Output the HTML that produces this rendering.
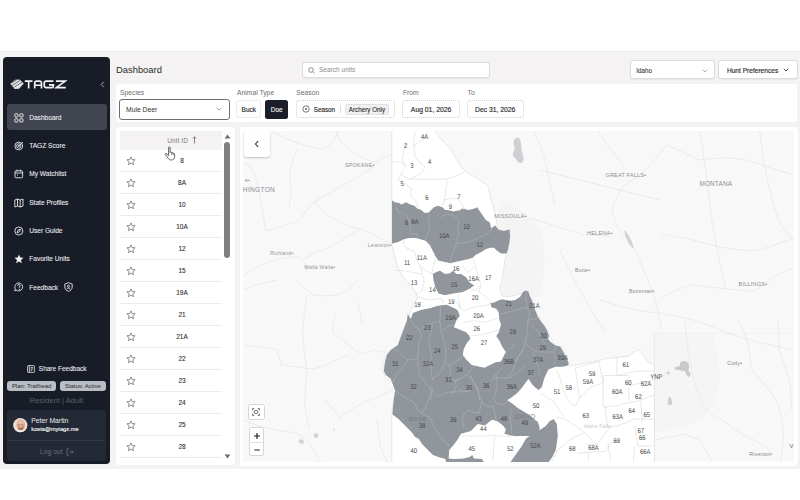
<!DOCTYPE html>
<html><head><meta charset="utf-8">
<style>
*{box-sizing:border-box;margin:0;padding:0}
html,body{width:800px;height:500px;overflow:hidden;background:#fff;font-family:"Liberation Sans",sans-serif;color:#2a2a2a}
.a{position:absolute}
.t{position:absolute;white-space:nowrap;line-height:1}
#bg{left:0;top:51px;width:800px;height:418px;background:#f4f2f3;border-top:1.5px solid #ebebeb}
#side{left:3px;top:57px;width:107.3px;height:407.3px;background:#181c27;border-radius:4px}
.nav{color:#eceef2;font-size:6.6px;-webkit-text-stroke:0.08px #eceef2}
.panel{background:#fff;border-radius:3px}
.lbl{color:#6e6e6e;font-size:6.8px}
.box{background:#fff;border:1px solid #e6e6e6;border-radius:3px}
.dash{background:#fff;border:0.75px dotted #d0d0d0;border-radius:3px}
.row{position:absolute;left:120px;width:102px;height:22px;border-bottom:1px solid #ececec}
.num{position:absolute;left:0;width:100%;text-align:center;font-size:6.8px;color:#2d2d2d;top:7px;padding-left:20px}
.star{position:absolute;left:6px;top:6px}
</style></head><body>
<div id="bg" class="a"></div>

<!-- SIDEBAR -->
<div id="side" class="a"></div>
<!-- logo -->
<svg class="a" style="left:0;top:70px" width="80" height="25" viewBox="0 70 80 25">
 <g fill="#f4f4f4">
  <path d="M10.3 83.8 L15.2 79.8 L19.5 79.6 L23.8 83.4 L19 88.8 L14.6 88.9 Z" opacity="0.92"/>
 </g>
 <path d="M12 85.5 L20 80.5 M13.5 87.5 L22.5 82 M11.5 83 L16.5 80" stroke="#1a1d28" stroke-width="0.7" opacity="0.8"/>
 <g fill="none" stroke="#f4f4f4" stroke-width="1.65" stroke-linejoin="miter">
  <path d="M24.8 81.1 H32.5 M28.65 81.1 V88.4"/>
  <path d="M34.7 88.4 V83.2 Q34.7 81.1 36.8 81.1 H39.4 Q41.5 81.1 41.5 83.2 V88.4 M34.7 85.2 H41.5"/>
  <path d="M53.4 81.1 H46.3 Q44.2 81.1 44.2 83.2 V85.6 Q44.2 87.6 46.3 87.6 H51.6 Q53.4 87.6 53.4 85.8 V84.9 H49"/>
  <path d="M55.9 81.1 H65.2 L56.3 87.6 H65.8"/>
 </g>
</svg>
<svg class="a" style="left:100px;top:81px" width="5" height="7" viewBox="0 0 5 7"><path d="M3.8 0.8 L1.2 3.5 L3.8 6.2" fill="none" stroke="#b8bbc2" stroke-width="0.9"/></svg>

<div class="a" style="left:6.5px;top:104px;width:100px;height:26px;background:#41454f;border-radius:3px"></div>
<!-- nav icons -->
<svg class="a" style="left:14px;top:112.5px" width="10" height="10" viewBox="0 0 10 10" fill="none" stroke="#e8e8ea" stroke-width="1"><rect x="0.8" y="0.8" width="3.2" height="3.2" rx="0.8"/><rect x="5.8" y="0.8" width="3.2" height="3.2" rx="0.8"/><rect x="0.8" y="5.8" width="3.2" height="3.2" rx="0.8"/><rect x="5.8" y="5.8" width="3.2" height="3.2" rx="0.8"/></svg>
<div class="t nav" style="left:29.2px;top:114.7px">Dashboard</div>

<svg class="a" style="left:14px;top:140.8px" width="10" height="10" viewBox="0 0 10 10" fill="none" stroke="#e8e8ea" stroke-width="0.9"><circle cx="4.8" cy="5" r="3.9"/><circle cx="4.8" cy="5" r="2.2"/><circle cx="4.8" cy="5" r="0.6"/><path d="M4.8 5 L8.8 1"/></svg>
<div class="t nav" style="left:29.2px;top:143.0px">TAGZ Score</div>

<svg class="a" style="left:14px;top:169px" width="10" height="10" viewBox="0 0 10 10" fill="none" stroke="#e8e8ea" stroke-width="0.9"><rect x="1" y="1.8" width="7.6" height="7" rx="1"/><path d="M1 4 H8.6 M3 0.6 V2.6 M6.6 0.6 V2.6 M3 6 H4"/></svg>
<div class="t nav" style="left:29.2px;top:171.2px">My Watchlist</div>

<svg class="a" style="left:14px;top:197.6px" width="10" height="10" viewBox="0 0 10 10" fill="none" stroke="#e8e8ea" stroke-width="0.9"><path d="M0.8 2 L3.5 1 L6.2 2 L9 1 V8 L6.2 9 L3.5 8 L0.8 9 Z M3.5 1 V8 M6.2 2 V9"/></svg>
<div class="t nav" style="left:29.2px;top:199.8px">State Profiles</div>

<svg class="a" style="left:14px;top:225.8px" width="10" height="10" viewBox="0 0 10 10" fill="none" stroke="#e8e8ea" stroke-width="0.9"><circle cx="4.8" cy="5" r="4"/><path d="M6.5 3.2 L5.6 5.8 L3.1 6.8 L4 4.2 Z"/></svg>
<div class="t nav" style="left:29.2px;top:228.0px">User Guide</div>

<svg class="a" style="left:13.5px;top:254px" width="10" height="10" viewBox="0 0 10 10"><path d="M5 0.6 L6.3 3.6 L9.5 3.8 L7 5.9 L7.8 9.2 L5 7.4 L2.2 9.2 L3 5.9 L0.5 3.8 L3.7 3.6 Z" fill="#f2f2f2"/></svg>
<div class="t nav" style="left:29.2px;top:256.3px">Favorite Units</div>

<svg class="a" style="left:14px;top:282.3px" width="10" height="10" viewBox="0 0 10 10" fill="none" stroke="#e8e8ea" stroke-width="0.9"><path d="M4.9 0.9 A4 4 0 1 1 2 7.9 L0.8 9 L1.2 6.6 A4 4 0 0 1 4.9 0.9 Z"/><path d="M3.6 3.8 A1.3 1.3 0 1 1 5.2 5 V5.8"/><circle cx="5.2" cy="7.3" r="0.3"/></svg>
<div class="t nav" style="left:29.2px;top:284.5px">Feedback</div>
<svg class="a" style="left:63.5px;top:282.3px" width="9" height="10" viewBox="0 0 9 10" fill="none" stroke="#e8e8ea" stroke-width="0.9"><path d="M4.5 0.7 L8.2 2 V5 C8.2 7.2 6.5 8.7 4.5 9.3 C2.5 8.7 0.8 7.2 0.8 5 V2 Z"/><circle cx="4.5" cy="4.3" r="1.1"/><path d="M2.8 7 C3.3 6 5.7 6 6.2 7"/></svg>

<!-- share feedback -->
<svg class="a" style="left:27px;top:364.5px" width="8" height="8" viewBox="0 0 8 8" fill="none" stroke="#e8e8ea" stroke-width="0.8"><rect x="0.6" y="0.6" width="6.8" height="6.8" rx="0.6"/><path d="M2.3 0.6 V7.4 M3.6 2.6 H6 M3.6 4 H6 M3.6 5.4 H5"/></svg>
<div class="t nav" style="left:38.8px;top:366.3px;font-size:6.5px">Share Feedback</div>

<div class="a" style="left:7.2px;top:381px;width:48.8px;height:10.2px;background:#b9bdc4;border-radius:3px"></div>
<div class="t" style="left:7.2px;top:383.6px;width:48.8px;text-align:center;font-size:5.9px;color:#2a2c33">Plan: Trailhead</div>
<div class="a" style="left:59.7px;top:381px;width:46.4px;height:10.2px;background:#b9bdc4;border-radius:3px"></div>
<div class="t" style="left:59.7px;top:383.6px;width:46.4px;text-align:center;font-size:5.9px;color:#2a2c33">Status: Active</div>
<div class="t" style="left:29.5px;top:397px;font-size:7.7px;color:#5b606b">Resident | Adult</div>

<div class="a" style="left:6.5px;top:410px;width:99.5px;height:51px;background:#232a36;border-radius:3px"></div>
<svg class="a" style="left:12.5px;top:418px" width="15" height="15" viewBox="0 0 15 15"><defs><clipPath id="av"><circle cx="7.3" cy="7.2" r="7"/></clipPath></defs><circle cx="7.3" cy="7.2" r="7.1" fill="#efe0d6"/><g clip-path="url(#av)"><ellipse cx="7.8" cy="6.8" rx="4.3" ry="5.2" fill="#d7a285"/><ellipse cx="7.6" cy="4.2" rx="3.6" ry="2.6" fill="#e4bba3"/><path d="M5 8.5 C6 10.5 9 10.5 10.5 8.6 L10.3 11 C9 12.6 6.5 12.6 5.2 11 Z" fill="#a96f55"/><path d="M2 15 C3 11.5 12 11.5 13 15 Z" fill="#f4ece6"/><path d="M5.6 6.6 H6.8 M8.6 6.6 H9.8" stroke="#6b4636" stroke-width="0.6"/></g></svg>
<div class="t" style="left:31.3px;top:418px;font-size:6.8px;color:#e9eaee">Peter Martin</div>
<div class="t" style="left:31.3px;top:427.2px;font-size:5.8px;color:#fafafa;-webkit-text-stroke:0.12px #fafafa;letter-spacing:-0.05px">kosta@mytagz.me</div>
<div class="a" style="left:8px;top:440px;width:97px;height:1px;background:#323848"></div>
<div class="t" style="left:40px;top:448.6px;font-size:6.8px;color:#686d78">Log out</div>
<svg class="a" style="left:65.5px;top:447.5px" width="8" height="8" viewBox="0 0 8 8" fill="none" stroke="#6b707b" stroke-width="0.8"><path d="M3 0.7 H1 V7.3 H3 M3 4 H7.2 M5.6 2.4 L7.2 4 L5.6 5.6"/></svg>

<!-- HEADER -->
<div class="t" style="left:116px;top:65px;font-size:9.4px;color:#2b2b2b;color:#2b2b2b">Dashboard</div>
<div class="a box" style="left:301.8px;top:61.6px;width:188.4px;height:16.8px;border-color:#dcdcdc;box-shadow:0 0.5px 1px rgba(0,0,0,0.05)"></div>
<svg class="a" style="left:307.5px;top:66.5px" width="7" height="7" viewBox="0 0 7 7" fill="none" stroke="#777" stroke-width="0.8"><circle cx="3" cy="3" r="2.3"/><path d="M4.7 4.7 L6.4 6.4"/></svg>
<div class="t" style="left:319px;top:67px;font-size:6.55px;color:#8c8c8c">Search units</div>

<div class="a box" style="left:630px;top:60.4px;width:84.5px;height:19px;border-color:#dcdcdc;box-shadow:0 0.5px 1px rgba(0,0,0,0.05)"></div>
<div class="t" style="left:636.2px;top:67.6px;font-size:6.3px;color:#333;-webkit-text-stroke:0.08px #333">Idaho</div>
<svg class="a" style="left:702px;top:68.5px" width="6" height="4" viewBox="0 0 6 4"><path d="M0.8 0.8 L3 3 L5.2 0.8" fill="none" stroke="#888" stroke-width="0.7"/></svg>
<div class="a box" style="left:718.3px;top:60.4px;width:79.5px;height:19px;border-color:#dcdcdc;box-shadow:0 0.5px 1px rgba(0,0,0,0.05)"></div>
<div class="t" style="left:726.9px;top:67.6px;font-size:6.6px;color:#2a2a2a;-webkit-text-stroke:0.15px #2a2a2a">Hunt Preferences</div>
<svg class="a" style="left:783px;top:68.3px" width="6" height="4" viewBox="0 0 6 4"><path d="M0.8 0.8 L3 3 L5.2 0.8" fill="none" stroke="#333" stroke-width="0.9"/></svg>

<!-- FILTER PANEL -->
<div class="a panel" style="left:116px;top:83.7px;width:681.4px;height:38.3px"></div>
<div class="t lbl" style="left:120px;top:89.8px">Species</div>
<div class="a" style="left:119.2px;top:99.3px;width:111px;height:20.4px;border:1.25px solid #6e6e6e;border-radius:3px;background:#fff"></div>
<div class="t" style="left:126px;top:106.6px;font-size:6.8px;color:#333">Mule Deer</div>
<svg class="a" style="left:216.3px;top:107.3px" width="6" height="4" viewBox="0 0 6 4"><path d="M0.7 0.9 L3 3 L5.3 0.9" fill="none" stroke="#8a8a8a" stroke-width="0.85"/></svg>

<div class="t lbl" style="left:236.9px;top:89.8px">Animal Type</div>
<div class="a box" style="left:236.3px;top:100px;width:25px;height:18.3px;border-color:#ececec"></div>
<div class="t" style="left:236.3px;top:106.7px;width:25px;text-align:center;font-size:6.5px;color:#2a2a2a;-webkit-text-stroke:0.15px #2a2a2a">Buck</div>
<div class="a" style="left:265.3px;top:100px;width:22.8px;height:18.5px;background:#1b1e29;border-radius:2.5px"></div>
<div class="t" style="left:265.3px;top:106.7px;width:22.8px;text-align:center;font-size:6.5px;color:#f2f2f2;-webkit-text-stroke:0.12px #f2f2f2">Doe</div>

<div class="t lbl" style="left:296.2px;top:89.8px">Season</div>
<div class="a dash" style="left:296.2px;top:100.4px;width:99px;height:17.8px"></div>
<svg class="a" style="left:301.5px;top:105.4px" width="8" height="8" viewBox="0 0 8 8"><circle cx="4" cy="4" r="3.2" fill="none" stroke="#555" stroke-width="0.8"/><circle cx="4" cy="4" r="0.9" fill="#555"/></svg>
<div class="t" style="left:313.7px;top:106.9px;font-size:6.3px;color:#2a2a2a;-webkit-text-stroke:0.15px #2a2a2a">Season</div>
<div class="a" style="left:339.6px;top:105.4px;width:0.8px;height:7.6px;background:#dcdcdc"></div>
<div class="a" style="left:345px;top:103.7px;width:43.8px;height:11.3px;background:#f0f0f0;border:0.6px solid #e2e2e2;border-radius:2px"></div>
<div class="t" style="left:345px;top:106.9px;width:43.8px;text-align:center;font-size:6.3px;color:#2a2a2a;-webkit-text-stroke:0.1px #2a2a2a">Archery Only</div>

<div class="t lbl" style="left:402.9px;top:89.8px">From</div>
<div class="a dash" style="left:402.4px;top:100.1px;width:57.4px;height:18.4px"></div>
<div class="t" style="left:402.4px;top:106.9px;width:57.4px;text-align:center;font-size:6.8px;color:#2a2a2a;-webkit-text-stroke:0.15px #2a2a2a">Aug 01, 2026</div>
<div class="t lbl" style="left:467.6px;top:89.8px">To</div>
<div class="a dash" style="left:466.8px;top:100.1px;width:56.8px;height:18.4px"></div>
<div class="t" style="left:466.8px;top:106.9px;width:56.8px;text-align:center;font-size:6.8px;color:#2a2a2a;-webkit-text-stroke:0.15px #2a2a2a">Dec 31, 2026</div>

<!-- TABLE PANEL -->
<div class="a panel" style="left:116px;top:127px;width:119.1px;height:337.5px"></div>
<div class="a" style="left:120px;top:131px;width:102px;height:19px;background:#f4f2f3"></div>
<div class="t" style="left:167.2px;top:137.6px;font-size:6.4px;letter-spacing:0.2px;color:#7a7a7a">Unit ID</div>
<svg class="a" style="left:191.5px;top:136.3px" width="5" height="8" viewBox="0 0 5 8"><path d="M2.5 0.8 V7.5 M0.8 2.5 L2.5 0.8 L4.2 2.5" fill="none" stroke="#666" stroke-width="0.8"/></svg>
<div class="a" style="left:116px;top:150px;width:119.5px;height:311px;overflow:hidden">
<div class="a" style="left:4px;top:21.2px;width:102px;height:1px;background:#ececec"></div>
<svg class="a" style="left:9.6px;top:5.6px" width="10" height="10" viewBox="0 0 10 10"><path d="M5 0.9 L6.15 3.55 L9.1 3.8 L6.85 5.75 L7.55 8.7 L5 7.15 L2.45 8.7 L3.15 5.75 L0.9 3.8 L3.85 3.55 Z" fill="none" stroke="#6a6a6a" stroke-width="0.75" stroke-linejoin="round"/></svg>
<div class="t" style="left:46px;top:7.7px;width:40px;text-align:center;font-size:6.5px;color:#2a2a2a;-webkit-text-stroke:0.08px #2a2a2a">8</div>
<div class="a" style="left:4px;top:43.2px;width:102px;height:1px;background:#ececec"></div>
<svg class="a" style="left:9.6px;top:27.6px" width="10" height="10" viewBox="0 0 10 10"><path d="M5 0.9 L6.15 3.55 L9.1 3.8 L6.85 5.75 L7.55 8.7 L5 7.15 L2.45 8.7 L3.15 5.75 L0.9 3.8 L3.85 3.55 Z" fill="none" stroke="#6a6a6a" stroke-width="0.75" stroke-linejoin="round"/></svg>
<div class="t" style="left:46px;top:29.7px;width:40px;text-align:center;font-size:6.5px;color:#2a2a2a;-webkit-text-stroke:0.08px #2a2a2a">8A</div>
<div class="a" style="left:4px;top:65.2px;width:102px;height:1px;background:#ececec"></div>
<svg class="a" style="left:9.6px;top:49.6px" width="10" height="10" viewBox="0 0 10 10"><path d="M5 0.9 L6.15 3.55 L9.1 3.8 L6.85 5.75 L7.55 8.7 L5 7.15 L2.45 8.7 L3.15 5.75 L0.9 3.8 L3.85 3.55 Z" fill="none" stroke="#6a6a6a" stroke-width="0.75" stroke-linejoin="round"/></svg>
<div class="t" style="left:46px;top:51.7px;width:40px;text-align:center;font-size:6.5px;color:#2a2a2a;-webkit-text-stroke:0.08px #2a2a2a">10</div>
<div class="a" style="left:4px;top:87.2px;width:102px;height:1px;background:#ececec"></div>
<svg class="a" style="left:9.6px;top:71.6px" width="10" height="10" viewBox="0 0 10 10"><path d="M5 0.9 L6.15 3.55 L9.1 3.8 L6.85 5.75 L7.55 8.7 L5 7.15 L2.45 8.7 L3.15 5.75 L0.9 3.8 L3.85 3.55 Z" fill="none" stroke="#6a6a6a" stroke-width="0.75" stroke-linejoin="round"/></svg>
<div class="t" style="left:46px;top:73.7px;width:40px;text-align:center;font-size:6.5px;color:#2a2a2a;-webkit-text-stroke:0.08px #2a2a2a">10A</div>
<div class="a" style="left:4px;top:109.2px;width:102px;height:1px;background:#ececec"></div>
<svg class="a" style="left:9.6px;top:93.6px" width="10" height="10" viewBox="0 0 10 10"><path d="M5 0.9 L6.15 3.55 L9.1 3.8 L6.85 5.75 L7.55 8.7 L5 7.15 L2.45 8.7 L3.15 5.75 L0.9 3.8 L3.85 3.55 Z" fill="none" stroke="#6a6a6a" stroke-width="0.75" stroke-linejoin="round"/></svg>
<div class="t" style="left:46px;top:95.7px;width:40px;text-align:center;font-size:6.5px;color:#2a2a2a;-webkit-text-stroke:0.08px #2a2a2a">12</div>
<div class="a" style="left:4px;top:131.2px;width:102px;height:1px;background:#ececec"></div>
<svg class="a" style="left:9.6px;top:115.6px" width="10" height="10" viewBox="0 0 10 10"><path d="M5 0.9 L6.15 3.55 L9.1 3.8 L6.85 5.75 L7.55 8.7 L5 7.15 L2.45 8.7 L3.15 5.75 L0.9 3.8 L3.85 3.55 Z" fill="none" stroke="#6a6a6a" stroke-width="0.75" stroke-linejoin="round"/></svg>
<div class="t" style="left:46px;top:117.7px;width:40px;text-align:center;font-size:6.5px;color:#2a2a2a;-webkit-text-stroke:0.08px #2a2a2a">15</div>
<div class="a" style="left:4px;top:153.2px;width:102px;height:1px;background:#ececec"></div>
<svg class="a" style="left:9.6px;top:137.6px" width="10" height="10" viewBox="0 0 10 10"><path d="M5 0.9 L6.15 3.55 L9.1 3.8 L6.85 5.75 L7.55 8.7 L5 7.15 L2.45 8.7 L3.15 5.75 L0.9 3.8 L3.85 3.55 Z" fill="none" stroke="#6a6a6a" stroke-width="0.75" stroke-linejoin="round"/></svg>
<div class="t" style="left:46px;top:139.7px;width:40px;text-align:center;font-size:6.5px;color:#2a2a2a;-webkit-text-stroke:0.08px #2a2a2a">19A</div>
<div class="a" style="left:4px;top:175.2px;width:102px;height:1px;background:#ececec"></div>
<svg class="a" style="left:9.6px;top:159.6px" width="10" height="10" viewBox="0 0 10 10"><path d="M5 0.9 L6.15 3.55 L9.1 3.8 L6.85 5.75 L7.55 8.7 L5 7.15 L2.45 8.7 L3.15 5.75 L0.9 3.8 L3.85 3.55 Z" fill="none" stroke="#6a6a6a" stroke-width="0.75" stroke-linejoin="round"/></svg>
<div class="t" style="left:46px;top:161.7px;width:40px;text-align:center;font-size:6.5px;color:#2a2a2a;-webkit-text-stroke:0.08px #2a2a2a">21</div>
<div class="a" style="left:4px;top:197.2px;width:102px;height:1px;background:#ececec"></div>
<svg class="a" style="left:9.6px;top:181.6px" width="10" height="10" viewBox="0 0 10 10"><path d="M5 0.9 L6.15 3.55 L9.1 3.8 L6.85 5.75 L7.55 8.7 L5 7.15 L2.45 8.7 L3.15 5.75 L0.9 3.8 L3.85 3.55 Z" fill="none" stroke="#6a6a6a" stroke-width="0.75" stroke-linejoin="round"/></svg>
<div class="t" style="left:46px;top:183.7px;width:40px;text-align:center;font-size:6.5px;color:#2a2a2a;-webkit-text-stroke:0.08px #2a2a2a">21A</div>
<div class="a" style="left:4px;top:219.2px;width:102px;height:1px;background:#ececec"></div>
<svg class="a" style="left:9.6px;top:203.6px" width="10" height="10" viewBox="0 0 10 10"><path d="M5 0.9 L6.15 3.55 L9.1 3.8 L6.85 5.75 L7.55 8.7 L5 7.15 L2.45 8.7 L3.15 5.75 L0.9 3.8 L3.85 3.55 Z" fill="none" stroke="#6a6a6a" stroke-width="0.75" stroke-linejoin="round"/></svg>
<div class="t" style="left:46px;top:205.7px;width:40px;text-align:center;font-size:6.5px;color:#2a2a2a;-webkit-text-stroke:0.08px #2a2a2a">22</div>
<div class="a" style="left:4px;top:241.2px;width:102px;height:1px;background:#ececec"></div>
<svg class="a" style="left:9.6px;top:225.6px" width="10" height="10" viewBox="0 0 10 10"><path d="M5 0.9 L6.15 3.55 L9.1 3.8 L6.85 5.75 L7.55 8.7 L5 7.15 L2.45 8.7 L3.15 5.75 L0.9 3.8 L3.85 3.55 Z" fill="none" stroke="#6a6a6a" stroke-width="0.75" stroke-linejoin="round"/></svg>
<div class="t" style="left:46px;top:227.7px;width:40px;text-align:center;font-size:6.5px;color:#2a2a2a;-webkit-text-stroke:0.08px #2a2a2a">23</div>
<div class="a" style="left:4px;top:263.2px;width:102px;height:1px;background:#ececec"></div>
<svg class="a" style="left:9.6px;top:247.6px" width="10" height="10" viewBox="0 0 10 10"><path d="M5 0.9 L6.15 3.55 L9.1 3.8 L6.85 5.75 L7.55 8.7 L5 7.15 L2.45 8.7 L3.15 5.75 L0.9 3.8 L3.85 3.55 Z" fill="none" stroke="#6a6a6a" stroke-width="0.75" stroke-linejoin="round"/></svg>
<div class="t" style="left:46px;top:249.7px;width:40px;text-align:center;font-size:6.5px;color:#2a2a2a;-webkit-text-stroke:0.08px #2a2a2a">24</div>
<div class="a" style="left:4px;top:285.2px;width:102px;height:1px;background:#ececec"></div>
<svg class="a" style="left:9.6px;top:269.6px" width="10" height="10" viewBox="0 0 10 10"><path d="M5 0.9 L6.15 3.55 L9.1 3.8 L6.85 5.75 L7.55 8.7 L5 7.15 L2.45 8.7 L3.15 5.75 L0.9 3.8 L3.85 3.55 Z" fill="none" stroke="#6a6a6a" stroke-width="0.75" stroke-linejoin="round"/></svg>
<div class="t" style="left:46px;top:271.7px;width:40px;text-align:center;font-size:6.5px;color:#2a2a2a;-webkit-text-stroke:0.08px #2a2a2a">25</div>
<div class="a" style="left:4px;top:307.2px;width:102px;height:1px;background:#ececec"></div>
<svg class="a" style="left:9.6px;top:291.6px" width="10" height="10" viewBox="0 0 10 10"><path d="M5 0.9 L6.15 3.55 L9.1 3.8 L6.85 5.75 L7.55 8.7 L5 7.15 L2.45 8.7 L3.15 5.75 L0.9 3.8 L3.85 3.55 Z" fill="none" stroke="#6a6a6a" stroke-width="0.75" stroke-linejoin="round"/></svg>
<div class="t" style="left:46px;top:293.7px;width:40px;text-align:center;font-size:6.5px;color:#2a2a2a;-webkit-text-stroke:0.08px #2a2a2a">28</div>
<div class="a" style="left:4px;top:329.2px;width:102px;height:1px;background:#ececec"></div>
<svg class="a" style="left:9.6px;top:313.6px" width="10" height="10" viewBox="0 0 10 10"><path d="M5 0.9 L6.15 3.55 L9.1 3.8 L6.85 5.75 L7.55 8.7 L5 7.15 L2.45 8.7 L3.15 5.75 L0.9 3.8 L3.85 3.55 Z" fill="none" stroke="#6a6a6a" stroke-width="0.75" stroke-linejoin="round"/></svg>
<div class="t" style="left:46px;top:315.7px;width:40px;text-align:center;font-size:6.5px;color:#2a2a2a;-webkit-text-stroke:0.08px #2a2a2a">30</div>
</div>
<!-- cursor hand -->
<svg class="a" style="left:164px;top:145.5px" width="13" height="15" viewBox="0 0 13 15"><path d="M4.6 1.6 C4.6 0.6 6.1 0.6 6.1 1.6 V6.4 C6.3 5.6 7.6 5.7 7.6 6.6 V7.1 C7.9 6.4 9.1 6.5 9.1 7.3 V7.8 C9.4 7.2 10.6 7.3 10.6 8.1 V10.6 C10.6 12.6 9.3 14 7.4 14 C5.7 14 4.8 13.3 3.9 12.1 L1.3 8.6 C0.9 8 1.6 7.2 2.4 7.7 L4.6 9.6 Z" fill="#fff" stroke="#3a3a3a" stroke-width="0.8" stroke-linejoin="round"/><path d="M7.6 7.2 V9 M9.1 7.8 V9.2" stroke="#3a3a3a" stroke-width="0.6"/></svg>


<!-- scrollbar -->
<svg class="a" style="left:223.5px;top:133.5px" width="7" height="5" viewBox="0 0 7 5"><path d="M0.5 4.5 L3.5 0.5 L6.5 4.5 Z" fill="#6e6e6e"/></svg>
<div class="a" style="left:224px;top:142px;width:6px;height:116px;background:#808080;border-radius:3px"></div>
<svg class="a" style="left:224px;top:454px" width="7" height="5" viewBox="0 0 7 5"><path d="M0.5 0.5 L3.5 4.5 L6.5 0.5 Z" fill="#6e6e6e"/></svg>

<!-- MAP PANEL -->
<div class="a panel" style="left:239.5px;top:127px;width:558px;height:339px"></div>
<svg class="a" style="left:243.2px;top:131px" width="551.3" height="330.5" viewBox="243.2 131 551.3 330.5">
<rect x="243" y="131" width="552" height="331" fill="#f8f8f8"/>
<path d="M654.5 333.5 H712 C719 350 722 378 716 400 C706 420 690 430 654.5 432 Z" fill="#f5f5f5"/><path d="M654.5 333.5 V461.5" stroke="#dedede" stroke-width="0.6"/>
<path d="M654.5 333.5 H794" stroke="#e2e2e2" stroke-width="0.6" stroke-dasharray="1 1"/>
<path d="M272 131 C285 138 300 146 323 149 C332 146 336 138 338 131" fill="none" stroke="#e3e3e3" stroke-width="0.65"/>
<path d="M298 149 C292 160 287 175 292 192 C290 200 289 205 290 207" fill="none" stroke="#e3e3e3" stroke-width="0.65"/>
<path d="M243 163 C252 165 256 175 259 189 C262 205 264 220 266 231 C275 229 290 224 298 221 C305 214 310 205 314 202 C325 196 336 189 355 179 C362 174 368 170 374 167" fill="none" stroke="#e3e3e3" stroke-width="0.65"/>
<path d="M314 202 C322 210 328 216 333 218 C340 222 348 226 352 227 C360 229 368 231 378 237 C384 240 388 242 392 244" fill="none" stroke="#e3e3e3" stroke-width="0.65"/>
<path d="M304 259 C312 254 320 251 323 250 C332 246 340 242 342 240 C350 235 355 232 358 231" fill="none" stroke="#e3e3e3" stroke-width="0.65"/>
<path d="M243 276 C250 272 255 268 259 266 C268 262 274 260 278 259 C286 258 293 257 299 256 C303 258 306 265 307 272" fill="none" stroke="#e3e3e3" stroke-width="0.65"/>
<path d="M336 131 C339 138 342 144 343 144 C350 150 356 155 362 157 C368 160 372 162 374 162 C378 161 382 158 392 155" fill="none" stroke="#e3e3e3" stroke-width="0.65"/>
<path d="M243 290 C250 287 256 285 262 284 C268 282 272 281 277 280" fill="none" stroke="#e3e3e3" stroke-width="0.65"/>
<path d="M295 280 C302 286 308 292 314 295 C322 296 330 296 336 295 C342 293 347 291 351 287 C354 284 356 282 358 280" fill="none" stroke="#e3e3e3" stroke-width="0.65"/>
<path d="M307 295 C305 310 303 325 303 336 C304 350 306 362 307 373 C306 385 305 395 305 406 C306 415 308 422 310 428" fill="none" stroke="#e3e3e3" stroke-width="0.65"/>
<path d="M243 345 C250 346 256 346 262 347 C270 348 274 349 277 350 C279 355 280 360 281 365 C292 366 302 368 314 369 C326 366 340 358 351 354" fill="none" stroke="#e3e3e3" stroke-width="0.65"/>
<path d="M336 313 C334 320 333 326 333 332 C340 338 346 343 351 347 C355 350 359 353 362 354 C366 353 370 351 373 350 C380 351 385 353 392 354" fill="none" stroke="#e3e3e3" stroke-width="0.65"/>
<path d="M325 399 C330 405 335 412 340 417 C344 414 348 411 351 410 C358 406 366 401 373 399 C380 396 386 393 392 391" fill="none" stroke="#e3e3e3" stroke-width="0.65"/>
<path d="M377 421 C378 430 380 440 381 447 C383 452 385 457 388 462" fill="none" stroke="#e3e3e3" stroke-width="0.65"/>
<path d="M358 302 C360 310 361 317 362 324" fill="none" stroke="#e3e3e3" stroke-width="0.65"/>
<path d="M243 420 C255 425 270 430 290 432 C300 433 310 440 320 462" fill="none" stroke="#e3e3e3" stroke-width="0.65"/>
<path d="M667 145 C680 150 690 156 699 160 C708 159 716 158 725 158 C733 158 740 159 746 160 C755 163 763 165 771 168 C778 170 785 172 794 175" fill="none" stroke="#e3e3e3" stroke-width="0.65"/>
<path d="M667 145 C660 155 650 165 640 175 C632 180 628 183 623 187 C618 195 614 202 612 209 C614 216 616 224 619 230 C622 233 625 236 627 238 C630 242 633 247 636 251 C640 262 645 272 650 285 C655 296 658 310 662 330" fill="none" stroke="#e3e3e3" stroke-width="0.65"/>
<path d="M525 217 C535 220 545 222 555 226 C565 229 572 231 581 234 C590 235 600 236 610 236" fill="none" stroke="#e3e3e3" stroke-width="0.65"/>
<path d="M661 234 C670 236 678 237 686 238 C697 241 708 244 720 247 C732 249 742 250 754 251 C765 249 778 244 794 238" fill="none" stroke="#e3e3e3" stroke-width="0.65"/>
<path d="M661 298 C670 293 680 288 691 285 C703 286 716 288 729 289 C738 290 746 291 754 291 C762 286 768 281 775 276 C782 272 788 270 794 268" fill="none" stroke="#e3e3e3" stroke-width="0.65"/>
<path d="M534 131 C538 140 542 150 545 160 C548 175 552 190 555 205" fill="none" stroke="#e3e3e3" stroke-width="0.65"/>
<path d="M598 131 C603 139 608 146 614 153 C619 160 623 166 627 170" fill="none" stroke="#e3e3e3" stroke-width="0.65"/>
<path d="M560 250 C566 262 572 275 580 290 C588 305 596 318 605 332" fill="none" stroke="#e3e3e3" stroke-width="0.65"/>
<path d="M600 300 C615 305 630 310 650 312 C675 315 700 320 720 330 C745 340 770 345 794 350" fill="none" stroke="#e3e3e3" stroke-width="0.65"/>
<path d="M700 131 C705 160 708 190 712 220 C715 240 720 262 726 290" fill="none" stroke="#e3e3e3" stroke-width="0.65"/>
<path d="M760 131 C762 150 765 170 770 190 C775 210 780 230 794 240" fill="none" stroke="#e3e3e3" stroke-width="0.65"/>
<path d="M540 170 C560 175 580 180 600 185 C620 190 640 195 660 200" fill="none" stroke="#e3e3e3" stroke-width="0.65"/>
<path d="M685 320 C686 335 688 350 691 365 C693 380 698 395 704.5 407 C710 414 715 417 721 419 C728 424 735 430 742 434 C748 437 754 440 760 443 C765 446 769 450 772 453.5" fill="none" stroke="#e3e3e3" stroke-width="0.65"/>
<path d="M739 320 C743 328 746 336 748 344 C750 352 751 360 751 368 C756 375 761 380 766 386 C771 392 775 398 778 404 C781 414 783 424 784 434 C783 443 782 452 781 461" fill="none" stroke="#e3e3e3" stroke-width="0.65"/>
<path d="M778 320 C779 330 779 340 779.5 350 C782 360 786 370 790 380 C791 390 791.5 400 791.5 410" fill="none" stroke="#e3e3e3" stroke-width="0.65"/>
<path d="M655 440 C665 438 675 436 685 434 C690 436 695 438 700 440 C704 447 708 454 712 461" fill="none" stroke="#e3e3e3" stroke-width="0.65"/>
<path d="M514 141 C515 137 519 137 520 139 C522 144 521 150 523 155 C525 159 523 164 520 163 C517 162 516 158 514 157 C512 154 514 151 515 148 C515 146 513 144 514 141 Z" fill="#cfd0d3"/><path d="M624 230 C628 233 632 240 634 248 C631 248 627 242 624 230 Z" fill="#d0d1d4"/>
<path d="M681 362 C684 360 688 361 689 364 C690 367 688 369 689 371 C691 373 691 376 689 377 C687 376 686 373 685 371 C683 371 681 371 680 370 C678 370 675 370 675 368 C676 366 679 367 680 366 C680 364 680 363 681 362 Z" fill="#c9cacd"/><path d="M669 397 C671 396 672 399 672.5 403 C672 406 669 406 668 404 C668 401 668 398 669 397 Z M667 372 C669 371 671 372 670 374 C668 375 666 374 667 372 Z" fill="#d0d1d4"/>
<path d="M299 440 C302 438 305 440 304 443 C302 445 299 444 299 440 Z M314 434 C317 432 320 434 318 437 C316 439 313 438 314 434 Z M333 429 C334 428 336 429 335 431 Z" fill="#d2d3d6"/>
<path d="M500 200 C515 205 530 215 540 230 C548 250 545 275 540 295 C530 305 515 303 503 298 C497 270 497 240 500 200 Z" fill="#f4f4f4"/>
<path d="M392.0 130.0 L434.0 130.0 L442.0 140.0 L450.0 148.0 L456.0 158.0 L462.0 168.0 L470.0 174.0 L480.0 180.0 L488.0 186.0 L490.0 194.0 L492.0 202.0 L494.0 208.0 L498.4 229.6 L504.0 231.0 L509.6 229.6 L510.3 235.2 L509.6 242.2 L508.2 249.2 L506.8 253.4 L505.0 260.0 L504.0 268.0 L502.0 280.0 L500.0 288.0 L502.0 296.0 L508.0 296.8 L515.0 295.4 L520.6 294.0 L526.2 290.6 L529.0 295.4 L531.8 301.0 L534.6 308.0 L537.4 315.0 L541.6 322.0 L547.2 330.4 L551.4 338.8 L555.6 345.8 L562.6 347.2 L565.4 354.2 L568.2 365.4 L575.0 365.0 L584.0 363.5 L593.0 362.0 L599.0 360.5 L605.0 359.0 L617.0 357.5 L629.0 356.0 L635.0 351.5 L639.5 350.0 L644.0 356.0 L648.5 362.0 L654.5 365.0 L654.5 463.0 L392.0 463.0 L392.0 414.0 L393.0 404.0 L395.0 396.0 L396.0 388.0 L393.0 382.0 L386.0 378.0 L383.0 370.0 L383.0 365.0 L385.6 357.2 L391.2 350.2 L398.2 346.0 L402.0 334.0 L406.0 324.0 L409.0 316.0 L411.0 310.0 L414.0 304.0 L418.0 298.0 L416.0 292.0 L410.0 284.0 L404.0 278.0 L399.0 270.0 L396.0 260.0 L394.0 252.0 L392.0 244.0 Z" fill="#ffffff" stroke="#d8d8d8" stroke-width="0.6"/>
<path d="M415.4 130.4 L414.6 137.6 L413.8 144 L416.2 147.2" fill="none" stroke="#d9d9d9" stroke-width="0.6" stroke-linejoin="round"/>
<path d="M413.6 145.6 L423.4 139.2 L428.2 131.2" fill="none" stroke="#d9d9d9" stroke-width="0.6" stroke-linejoin="round"/>
<path d="M391.7 161.6 L401 162.4 L405.8 166.4 L402.6 171.2 L401 174.4 L409 179.2" fill="none" stroke="#d9d9d9" stroke-width="0.6" stroke-linejoin="round"/>
<path d="M405.8 144 L403.4 153.6 L402.6 160 L405.8 166.4" fill="none" stroke="#d9d9d9" stroke-width="0.6" stroke-linejoin="round"/>
<path d="M413.6 145.6 L415.4 156.8 L420.2 163.2 L425 166.4 L423.4 171.2 L417 176 L409 179.2" fill="none" stroke="#d9d9d9" stroke-width="0.6" stroke-linejoin="round"/>
<path d="M409 179.2 L417 179.2 L433 179.2 L445.8 179.2 L452.2 177.6 L460.2 174.4 L466 171" fill="none" stroke="#d9d9d9" stroke-width="0.6" stroke-linejoin="round"/>
<path d="M401 174.4 L398 180 L405.8 184 L412.2 188.8 L410.6 195.2 L415.4 200 L419 209" fill="none" stroke="#d9d9d9" stroke-width="0.6" stroke-linejoin="round"/>
<path d="M447.4 180.8 L445.8 192 L444.2 200 L443 206" fill="none" stroke="#d9d9d9" stroke-width="0.6" stroke-linejoin="round"/>
<path d="M444.2 200 L452.2 198.4 L458.6 198.4 L462 204 L465 209" fill="none" stroke="#d9d9d9" stroke-width="0.6" stroke-linejoin="round"/>
<path d="M402.9 239.9 L406.1 248 L414.3 251.3 L417.5 261 L420.8 267.5 L422.4 274" fill="none" stroke="#d9d9d9" stroke-width="0.6" stroke-linejoin="round"/>
<path d="M396 270.5 L404.5 270.8 L412.6 272.4 L420.8 274 L424 277.3" fill="none" stroke="#d9d9d9" stroke-width="0.6" stroke-linejoin="round"/>
<path d="M424 277.3 L424 283.8 L422.4 290.3 L417.5 293.5" fill="none" stroke="#d9d9d9" stroke-width="0.6" stroke-linejoin="round"/>
<path d="M420.8 267.5 L432.2 274" fill="none" stroke="#d9d9d9" stroke-width="0.6" stroke-linejoin="round"/>
<path d="M436 258 L433 268 L432.2 274" fill="none" stroke="#d9d9d9" stroke-width="0.6" stroke-linejoin="round"/>
<path d="M417.5 296.8 L422.4 298.4 L430.5 300 L441.9 298.4 L443.5 303.3" fill="none" stroke="#d9d9d9" stroke-width="0.6" stroke-linejoin="round"/>
<path d="M458.2 294 L459.8 305 L459.8 309.8" fill="none" stroke="#d9d9d9" stroke-width="0.6" stroke-linejoin="round"/>
<path d="M463 265.9 L467.9 272.4 L474.4 267.5" fill="none" stroke="#d9d9d9" stroke-width="0.6" stroke-linejoin="round"/>
<path d="M472.8 257 L476 267.5 L479.3 277.3 L480.9 285.4 L479.3 291.9 L485.8 296.8 L492.3 303.3" fill="none" stroke="#d9d9d9" stroke-width="0.6" stroke-linejoin="round"/>
<path d="M469.6 288.7 L476 290.3 L480.9 285.4" fill="none" stroke="#d9d9d9" stroke-width="0.6" stroke-linejoin="round"/>
<path d="M455.6 301.2 L464 311 L475.2 306.8 L486.4 305.4 L497.6 301.2" fill="none" stroke="#d9d9d9" stroke-width="0.6" stroke-linejoin="round"/>
<path d="M464 322.2 L475 320.8 L486.4 322.2 L497.6 318" fill="none" stroke="#d9d9d9" stroke-width="0.6" stroke-linejoin="round"/>
<path d="M469.6 336 L480.8 334.8 L492 332 L500.4 329.2" fill="none" stroke="#d9d9d9" stroke-width="0.6" stroke-linejoin="round"/>
<path d="M461 436 L480 436.2 L495 435.6 L507.5 436.2 L520 435.6" fill="none" stroke="#d9d9d9" stroke-width="0.6" stroke-linejoin="round"/>
<path d="M495 435.6 L494 445 L493 461.5" fill="none" stroke="#d9d9d9" stroke-width="0.6" stroke-linejoin="round"/>
<path d="M556.4 370 L560.7 378.5 L562.8 389.2 L567.1 397.8 L571.4 404.2 L575.6 406.3" fill="none" stroke="#d9d9d9" stroke-width="0.6" stroke-linejoin="round"/>
<path d="M541.4 393.5 L547.8 397.8 L554.3 402 L558.5 408.5 L562.8 414.9 L565 417" fill="none" stroke="#d9d9d9" stroke-width="0.6" stroke-linejoin="round"/>
<path d="M575.6 367.8 L576.7 376.4 L577.8 387.1 L579.9 397.8 L575.6 406.3" fill="none" stroke="#d9d9d9" stroke-width="0.6" stroke-linejoin="round"/>
<path d="M575.6 367.8 L588.5 364.6 L599.2 361.4 L601.3 372.1 L603.4 382.8" fill="none" stroke="#d9d9d9" stroke-width="0.6" stroke-linejoin="round"/>
<path d="M579.9 397.8 L588.5 389.2 L597 385 L603.4 382.8" fill="none" stroke="#d9d9d9" stroke-width="0.6" stroke-linejoin="round"/>
<path d="M603.4 375.5 L603.4 406.3 L607.7 408.5" fill="none" stroke="#d9d9d9" stroke-width="0.6" stroke-linejoin="round"/>
<path d="M556.4 417 L565 419.2 L575.6 425.6 L584.2 432 L592.8 440.6 L597 444.8 L603.4 436.3 L609.9 427.7" fill="none" stroke="#d9d9d9" stroke-width="0.6" stroke-linejoin="round"/>
<path d="M586.3 444.8 L597 444.8" fill="none" stroke="#d9d9d9" stroke-width="0.6" stroke-linejoin="round"/>
<path d="M577.8 453.4 L588.5 452.3 L605.6 451.3 L611 443 L620 440" fill="none" stroke="#d9d9d9" stroke-width="0.6" stroke-linejoin="round"/>
<path d="M588.5 452.3 L588.5 461.5" fill="none" stroke="#d9d9d9" stroke-width="0.6" stroke-linejoin="round"/>
<path d="M617 357.5 L617 375.5 L638 371 L654 371" fill="none" stroke="#d9d9d9" stroke-width="0.6" stroke-linejoin="round"/>
<path d="M603.5 375.5 L629 375.5 L629 401" fill="none" stroke="#d9d9d9" stroke-width="0.6" stroke-linejoin="round"/>
<path d="M629 386 L641 383 L654 380" fill="none" stroke="#d9d9d9" stroke-width="0.6" stroke-linejoin="round"/>
<path d="M623 404 L638 401 L654 395" fill="none" stroke="#d9d9d9" stroke-width="0.6" stroke-linejoin="round"/>
<path d="M605 407 L620 405.5 L623 404" fill="none" stroke="#d9d9d9" stroke-width="0.6" stroke-linejoin="round"/>
<path d="M641 401 L642.5 422" fill="none" stroke="#d9d9d9" stroke-width="0.6" stroke-linejoin="round"/>
<path d="M608 428 L620 425 L635 419 L654 419" fill="none" stroke="#d9d9d9" stroke-width="0.6" stroke-linejoin="round"/>
<path d="M605 407 L608 428" fill="none" stroke="#d9d9d9" stroke-width="0.6" stroke-linejoin="round"/>
<path d="M635 425 L638 446 L654 446" fill="none" stroke="#d9d9d9" stroke-width="0.6" stroke-linejoin="round"/>
<path d="M635 446 L633.5 461.5" fill="none" stroke="#d9d9d9" stroke-width="0.6" stroke-linejoin="round"/>
<path d="M608 443 L611 461.5" fill="none" stroke="#d9d9d9" stroke-width="0.6" stroke-linejoin="round"/>
<path d="M552 461.5 L558 450 L570 440 L585 432" fill="none" stroke="#d9d9d9" stroke-width="0.6" stroke-linejoin="round"/>
<path d="M392.2 200.2 L395.0 202.3 L399.2 203.0 L402.0 204.4 L406.2 202.3 L410.4 204.4 L414.6 205.8 L417.4 208.6 L421.6 210.0 L424.4 212.8 L428.6 212.8 L431.4 210.0 L434.2 207.2 L438.4 205.8 L442.6 207.2 L445.4 210.0 L448.2 210.0 L453.6 211.4 L460.6 210.0 L462.0 208.6 L469.0 210.0 L474.6 208.6 L477.4 207.2 L480.2 211.4 L483.0 215.6 L485.8 219.8 L490.0 222.6 L491.4 228.2 L495.6 225.4 L498.4 229.6 L504.0 231.0 L509.6 229.6 L510.3 235.2 L509.6 242.2 L508.2 249.2 L506.8 253.4 L501.2 253.4 L497.0 250.6 L494.2 247.8 L490.0 247.8 L485.8 249.2 L481.6 252.0 L476.0 254.8 L473.2 257.6 L469.0 259.0 L462.0 260.4 L456.4 261.8 L450.8 263.2 L444.0 261.8 L438.4 260.4 L435.6 256.2 L432.8 250.6 L430.0 245.0 L425.8 240.8 L421.6 239.4 L416.0 238.0 L409.0 238.0 L403.4 239.4 L397.8 242.2 L392.2 243.6 Z" fill="#90969c"/>
<path d="M433.0 274.0 L436.5 272.0 L440.3 270.8 L445.2 274.0 L450.0 273.2 L453.3 270.8 L456.5 274.0 L461.4 274.0 L466.3 277.3 L469.6 282.2 L474.4 285.4 L469.6 288.7 L463.0 292.0 L453.3 293.5 L445.2 295.2 L438.7 293.5 L435.4 287.0 L433.8 280.5 Z" fill="#90969c"/>
<path d="M408.0 314.0 L411.0 319.0 L413.0 313.0 L421.0 310.0 L431.0 308.0 L437.0 306.0 L444.0 305.0 L446.8 304.8 L450.8 306.4 L455.6 308.8 L458.0 310.4 L460.0 316.0 L458.0 318.4 L456.4 320.8 L454.0 327.2 L458.0 328.8 L462.0 330.4 L466.0 332.0 L469.2 335.2 L470.5 339.0 L467.0 343.0 L464.0 349.0 L463.0 355.0 L466.4 359.4 L472.0 365.0 L479.0 366.4 L484.6 367.8 L490.2 365.0 L495.8 362.2 L501.2 361.6 L503.6 356.8 L506.0 352.0 L502.8 347.2 L499.6 340.8 L496.4 336.0 L498.8 332.8 L501.2 324.8 L499.6 320.0 L498.8 312.0 L496.4 308.8 L491.6 307.2 L490.8 303.2 L494.8 302.4 L498.0 300.8 L502.0 299.2 L506.0 300.0 L510.8 300.8 L515.6 300.0 L520.4 296.8 L522.8 292.8 L525.2 290.4 L528.4 291.2 L530.0 296.0 L532.4 300.8 L534.8 308.8 L538.0 316.8 L541.2 321.6 L545.2 326.4 L547.6 331.2 L549.2 336.0 L548.4 339.2 L551.6 342.4 L555.6 345.6 L560.4 346.4 L563.6 352.0 L566.8 358.4 L569.0 363.2 L568.2 365.4 L562.6 366.8 L555.6 366.8 L548.6 369.6 L545.8 375.2 L544.0 380.0 L542.0 387.0 L539.0 390.0 L536.0 388.0 L532.0 384.0 L529.0 379.0 L527.0 381.0 L522.0 388.0 L517.2 393.2 L511.6 397.4 L507.4 400.2 L513.0 404.0 L518.0 408.0 L523.0 411.0 L528.0 414.0 L533.0 418.0 L538.0 422.0 L540.0 428.0 L539.0 432.0 L534.0 434.0 L530.0 436.0 L515.0 436.0 L510.2 435.2 L504.6 433.8 L506.0 429.6 L503.2 425.4 L497.6 421.2 L492.0 419.8 L485.0 425.4 L478.0 424.0 L471.0 431.0 L461.2 433.8 L457.5 440.0 L453.8 445.0 L449.4 450.0 L448.8 460.0 L446.9 461.6 L445.0 458.8 L440.0 457.5 L433.2 455.0 L427.6 449.4 L422.0 443.8 L419.2 438.9 L415.0 436.8 L412.2 432.6 L405.2 425.6 L398.2 418.6 L392.6 414.4 L393.3 406.0 L394.0 399.0 L395.4 390.6 L391.0 379.0 L386.0 375.0 L384.0 371.0 L385.0 363.0 L387.0 355.0 L391.0 350.0 L398.0 345.0 L401.0 337.0 L404.0 329.0 L407.0 321.0 Z" fill="#90969c"/>
<path d="M526.0 439.0 L532.0 434.0 L540.0 430.0 L546.0 426.0 L550.0 421.0 L554.0 419.0 L557.0 424.0 L558.0 436.0 L556.0 450.0 L552.0 458.0 L548.0 463.0 L510.0 463.0 L515.0 456.0 L522.0 446.0 Z" fill="#90969c"/>
<path d="M446.0 462.0 L447.0 458.5 L455.0 459.0 L464.0 458.5 L470.0 457.0 L472.5 455.0 L474.0 458.5 L482.0 459.0 L484.0 462.0 Z" fill="#90969c"/>
<path d="M396.4 207.2 L397.8 211.4 L403.4 212.8 L407.6 217 L410.4 224 L410.4 231 L411.8 233.8 L417.4 233.8 L418.8 238" fill="none" stroke="#b1b5ba" stroke-width="0.6" stroke-linejoin="round"/>
<path d="M430 214.2 L428.6 221.2 L430 228.2 L428.6 232.4 L425.8 236.6 L425.8 240.8" fill="none" stroke="#b1b5ba" stroke-width="0.6" stroke-linejoin="round"/>
<path d="M441.2 217 L446.8 214.2 L453.8 215.6 L459.4 219.8 L457.8 226.8 L459.2 233.8 L456.4 239.4 L456.4 243.6" fill="none" stroke="#b1b5ba" stroke-width="0.6" stroke-linejoin="round"/>
<path d="M456.4 243.6 L469 242.2 L478.8 238 L487.2 233.8 L491.4 231 L491.4 228.2" fill="none" stroke="#b1b5ba" stroke-width="0.6" stroke-linejoin="round"/>
<path d="M456.4 243.6 L453.6 252 L450.8 259 L450.8 263" fill="none" stroke="#b1b5ba" stroke-width="0.6" stroke-linejoin="round"/>
<path d="M392.6 348.2 L398.2 351 L403.1 355.9 L407.3 360.1 L413.6 359.4 L417.8 358" fill="none" stroke="#b1b5ba" stroke-width="0.6" stroke-linejoin="round"/>
<path d="M407.3 360.1 L405.9 363.6 L402.4 367.8 L398.2 372 L395.4 377.6 L392.6 383.2" fill="none" stroke="#b1b5ba" stroke-width="0.6" stroke-linejoin="round"/>
<path d="M411 319 L414 325 L418 328 L422 335 L419 345 L417.8 358" fill="none" stroke="#b1b5ba" stroke-width="0.6" stroke-linejoin="round"/>
<path d="M417.8 358 L418.5 366.4 L419.9 374.8 L424.8 381.8 L429 386 L431.8 391.6 L431.1 400" fill="none" stroke="#b1b5ba" stroke-width="0.6" stroke-linejoin="round"/>
<path d="M433 323 L429 341.2 L430.4 349.6 L431.8 358 L431.1 366.4 L431.8 374.8 L433.2 380.4" fill="none" stroke="#b1b5ba" stroke-width="0.6" stroke-linejoin="round"/>
<path d="M441 307 L440 321 L433 323 L427 325 L420 330" fill="none" stroke="#b1b5ba" stroke-width="0.6" stroke-linejoin="round"/>
<path d="M440 321 L441.2 330 L443.3 338.4 L445.4 346.8 L446.1 355.2 L445.4 362.2 L449.6 365 L455.2 362.2 L460.8 358 L463 355" fill="none" stroke="#b1b5ba" stroke-width="0.6" stroke-linejoin="round"/>
<path d="M441.2 331 L451 325 L455 325" fill="none" stroke="#b1b5ba" stroke-width="0.6" stroke-linejoin="round"/>
<path d="M445.4 362.2 L442.6 369.2 L438.4 374.8 L432.8 379" fill="none" stroke="#b1b5ba" stroke-width="0.6" stroke-linejoin="round"/>
<path d="M449.6 365 L451 372 L449.6 377.6 L455.2 380.4 L462.2 377.6 L466.4 374.8 L469.2 372 L475 366" fill="none" stroke="#b1b5ba" stroke-width="0.6" stroke-linejoin="round"/>
<path d="M466.4 374.8 L470.6 377.6 L474.8 383.2 L477.6 388.8 L479 394.4 L480 400" fill="none" stroke="#b1b5ba" stroke-width="0.6" stroke-linejoin="round"/>
<path d="M455.2 380.4 L456.6 386 L453.8 391.6 L451 397.2" fill="none" stroke="#b1b5ba" stroke-width="0.6" stroke-linejoin="round"/>
<path d="M458 388.8 L465 391.6 L472 390.2" fill="none" stroke="#b1b5ba" stroke-width="0.6" stroke-linejoin="round"/>
<path d="M493 377.6 L497.2 373.4 L503 368" fill="none" stroke="#b1b5ba" stroke-width="0.6" stroke-linejoin="round"/>
<path d="M395.4 390.6 L401 394.8 L408 399 L415 403.2 L417.8 410.2 L422 413 L429 417.2 L431.8 421.4 L436 429.8 L441.6 438.2 L447.2 443.8 L450 446" fill="none" stroke="#b1b5ba" stroke-width="0.6" stroke-linejoin="round"/>
<path d="M431.8 385 L432.5 390.6 L429 397.6 L426.2 406 L423.4 411.6 L422 413" fill="none" stroke="#b1b5ba" stroke-width="0.6" stroke-linejoin="round"/>
<path d="M432.5 390.6 L436 394.8 L440.2 396.2 L444.4 393.4 L450 392 L457 391.8 L465.4 391.8 L472.4 389" fill="none" stroke="#b1b5ba" stroke-width="0.6" stroke-linejoin="round"/>
<path d="M471 375 L473.8 383.4 L478 389 L479.4 396 L482.2 401.6 L480.8 407.2 L479.4 412.8" fill="none" stroke="#b1b5ba" stroke-width="0.6" stroke-linejoin="round"/>
<path d="M479.4 412.8 L473.8 412.8 L468.2 410 L464 414.2 L462.6 421.2 L464 428.2" fill="none" stroke="#b1b5ba" stroke-width="0.6" stroke-linejoin="round"/>
<path d="M482.2 403 L489.2 407.2 L493.4 405.8 L494.8 412.8 L496.2 419.8" fill="none" stroke="#b1b5ba" stroke-width="0.6" stroke-linejoin="round"/>
<path d="M496.2 375 L497.6 382 L496.2 391.8 L493.4 398.8 L496.2 403 L503.2 404.4 L508.8 401.6" fill="none" stroke="#b1b5ba" stroke-width="0.6" stroke-linejoin="round"/>
<path d="M511.6 408.6 L510.2 417 L511.6 425.4 L512 434" fill="none" stroke="#b1b5ba" stroke-width="0.6" stroke-linejoin="round"/>
<path d="M492 379.2 L499 377.8 L510.2 377.8 L518 372 L525 366" fill="none" stroke="#b1b5ba" stroke-width="0.6" stroke-linejoin="round"/>
<path d="M450 379.2 L458.4 380.6 L462 378" fill="none" stroke="#b1b5ba" stroke-width="0.6" stroke-linejoin="round"/>
<path d="M499.6 314.4 L506 312.8 L514 310.4 L520.4 308.8 L526.8 307.2" fill="none" stroke="#b1b5ba" stroke-width="0.6" stroke-linejoin="round"/>
<path d="M526.8 291.2 L526 297.6 L526.8 307.2 L530 313.6 L528.4 320" fill="none" stroke="#b1b5ba" stroke-width="0.6" stroke-linejoin="round"/>
<path d="M528.4 320 L527.6 329.6 L526.8 336 L525.2 342.4 L523.6 348.8 L518.8 355.2 L515.6 361.6" fill="none" stroke="#b1b5ba" stroke-width="0.6" stroke-linejoin="round"/>
<path d="M530 320 L536.4 318.4 L538 317" fill="none" stroke="#b1b5ba" stroke-width="0.6" stroke-linejoin="round"/>
<path d="M531.6 324.8 L538 331.2 L542.8 339.2 L546 345.6" fill="none" stroke="#b1b5ba" stroke-width="0.6" stroke-linejoin="round"/>
<path d="M515.6 342.4 L512.4 347.2 L507.6 350.4 L506 354" fill="none" stroke="#b1b5ba" stroke-width="0.6" stroke-linejoin="round"/>
<path d="M525.2 342.4 L531.6 348.8 L538 352 L546 352 L554 352 L557.2 347.2" fill="none" stroke="#b1b5ba" stroke-width="0.6" stroke-linejoin="round"/>
<path d="M554 352 L555.6 358.4 L554 364.8" fill="none" stroke="#b1b5ba" stroke-width="0.6" stroke-linejoin="round"/>
<path d="M523.6 350.4 L518.8 356.8 L515.6 363.2 L512 372 L505 380" fill="none" stroke="#b1b5ba" stroke-width="0.6" stroke-linejoin="round"/>
<path d="M533.2 352 L534.8 358.4 L538 364.8 L540 375" fill="none" stroke="#b1b5ba" stroke-width="0.6" stroke-linejoin="round"/>
<text transform="translate(424.8 137.7) scale(0.86 1)" font-size="6.9" fill="#474747" text-anchor="middle" dominant-baseline="central" font-family="Liberation Sans" text-rendering="geometricPrecision">4A</text>
<text transform="translate(405.8 146.1) scale(0.86 1)" font-size="6.9" fill="#474747" text-anchor="middle" dominant-baseline="central" font-family="Liberation Sans" text-rendering="geometricPrecision">2</text>
<text transform="translate(412.2 166.5) scale(0.86 1)" font-size="6.9" fill="#474747" text-anchor="middle" dominant-baseline="central" font-family="Liberation Sans" text-rendering="geometricPrecision">3</text>
<text transform="translate(429.8 162.9) scale(0.86 1)" font-size="6.9" fill="#474747" text-anchor="middle" dominant-baseline="central" font-family="Liberation Sans" text-rendering="geometricPrecision">4</text>
<text transform="translate(402.4 184.7) scale(0.86 1)" font-size="6.9" fill="#474747" text-anchor="middle" dominant-baseline="central" font-family="Liberation Sans" text-rendering="geometricPrecision">5</text>
<text transform="translate(427.0 198.7) scale(0.86 1)" font-size="6.9" fill="#474747" text-anchor="middle" dominant-baseline="central" font-family="Liberation Sans" text-rendering="geometricPrecision">6</text>
<text transform="translate(459.2 197.3) scale(0.86 1)" font-size="6.9" fill="#474747" text-anchor="middle" dominant-baseline="central" font-family="Liberation Sans" text-rendering="geometricPrecision">7</text>
<text transform="translate(450.6 207.1) scale(0.86 1)" font-size="6.9" fill="#474747" text-anchor="middle" dominant-baseline="central" font-family="Liberation Sans" text-rendering="geometricPrecision">9</text>
<text transform="translate(406.6 223.9) scale(0.86 1)" font-size="6.9" fill="#474747" text-anchor="middle" dominant-baseline="central" font-family="Liberation Sans" text-rendering="geometricPrecision">8</text>
<text transform="translate(415.0 222.5) scale(0.86 1)" font-size="6.9" fill="#474747" text-anchor="middle" dominant-baseline="central" font-family="Liberation Sans" text-rendering="geometricPrecision">8A</text>
<text transform="translate(466.8 227.3) scale(0.86 1)" font-size="6.9" fill="#474747" text-anchor="middle" dominant-baseline="central" font-family="Liberation Sans" text-rendering="geometricPrecision">10</text>
<text transform="translate(444.4 236.5) scale(0.86 1)" font-size="6.9" fill="#474747" text-anchor="middle" dominant-baseline="central" font-family="Liberation Sans" text-rendering="geometricPrecision">10A</text>
<text transform="translate(480.0 245.7) scale(0.86 1)" font-size="6.9" fill="#474747" text-anchor="middle" dominant-baseline="central" font-family="Liberation Sans" text-rendering="geometricPrecision">12</text>
<text transform="translate(407.2 263.4) scale(0.86 1)" font-size="6.9" fill="#474747" text-anchor="middle" dominant-baseline="central" font-family="Liberation Sans" text-rendering="geometricPrecision">11</text>
<text transform="translate(422.0 258.9) scale(0.86 1)" font-size="6.9" fill="#474747" text-anchor="middle" dominant-baseline="central" font-family="Liberation Sans" text-rendering="geometricPrecision">11A</text>
<text transform="translate(456.2 269.9) scale(0.86 1)" font-size="6.9" fill="#474747" text-anchor="middle" dominant-baseline="central" font-family="Liberation Sans" text-rendering="geometricPrecision">16</text>
<text transform="translate(473.8 279.9) scale(0.86 1)" font-size="6.9" fill="#474747" text-anchor="middle" dominant-baseline="central" font-family="Liberation Sans" text-rendering="geometricPrecision">16A</text>
<text transform="translate(488.4 278.3) scale(0.86 1)" font-size="6.9" fill="#474747" text-anchor="middle" dominant-baseline="central" font-family="Liberation Sans" text-rendering="geometricPrecision">17</text>
<text transform="translate(414.2 283.3) scale(0.86 1)" font-size="6.9" fill="#474747" text-anchor="middle" dominant-baseline="central" font-family="Liberation Sans" text-rendering="geometricPrecision">13</text>
<text transform="translate(454.2 285.5) scale(0.86 1)" font-size="6.9" fill="#474747" text-anchor="middle" dominant-baseline="central" font-family="Liberation Sans" text-rendering="geometricPrecision">15</text>
<text transform="translate(432.6 290.3) scale(0.86 1)" font-size="6.9" fill="#474747" text-anchor="middle" dominant-baseline="central" font-family="Liberation Sans" text-rendering="geometricPrecision">14</text>
<text transform="translate(417.8 305.9) scale(0.86 1)" font-size="6.9" fill="#474747" text-anchor="middle" dominant-baseline="central" font-family="Liberation Sans" text-rendering="geometricPrecision">18</text>
<text transform="translate(451.4 302.9) scale(0.86 1)" font-size="6.9" fill="#474747" text-anchor="middle" dominant-baseline="central" font-family="Liberation Sans" text-rendering="geometricPrecision">19</text>
<text transform="translate(475.2 298.7) scale(0.86 1)" font-size="6.9" fill="#474747" text-anchor="middle" dominant-baseline="central" font-family="Liberation Sans" text-rendering="geometricPrecision">20</text>
<text transform="translate(509.0 304.5) scale(0.86 1)" font-size="6.9" fill="#474747" text-anchor="middle" dominant-baseline="central" font-family="Liberation Sans" text-rendering="geometricPrecision">21</text>
<text transform="translate(534.6 306.7) scale(0.86 1)" font-size="6.9" fill="#474747" text-anchor="middle" dominant-baseline="central" font-family="Liberation Sans" text-rendering="geometricPrecision">21A</text>
<text transform="translate(450.6 319.0) scale(0.86 1)" font-size="6.9" fill="#474747" text-anchor="middle" dominant-baseline="central" font-family="Liberation Sans" text-rendering="geometricPrecision">19A</text>
<text transform="translate(478.6 316.2) scale(0.86 1)" font-size="6.9" fill="#474747" text-anchor="middle" dominant-baseline="central" font-family="Liberation Sans" text-rendering="geometricPrecision">20A</text>
<text transform="translate(427.6 328.4) scale(0.86 1)" font-size="6.9" fill="#474747" text-anchor="middle" dominant-baseline="central" font-family="Liberation Sans" text-rendering="geometricPrecision">23</text>
<text transform="translate(477.0 329.4) scale(0.86 1)" font-size="6.9" fill="#474747" text-anchor="middle" dominant-baseline="central" font-family="Liberation Sans" text-rendering="geometricPrecision">26</text>
<text transform="translate(513.0 332.9) scale(0.86 1)" font-size="6.9" fill="#474747" text-anchor="middle" dominant-baseline="central" font-family="Liberation Sans" text-rendering="geometricPrecision">28</text>
<text transform="translate(409.4 338.5) scale(0.86 1)" font-size="6.9" fill="#474747" text-anchor="middle" dominant-baseline="central" font-family="Liberation Sans" text-rendering="geometricPrecision">22</text>
<text transform="translate(484.2 343.7) scale(0.86 1)" font-size="6.9" fill="#474747" text-anchor="middle" dominant-baseline="central" font-family="Liberation Sans" text-rendering="geometricPrecision">27</text>
<text transform="translate(437.4 351.9) scale(0.86 1)" font-size="6.9" fill="#474747" text-anchor="middle" dominant-baseline="central" font-family="Liberation Sans" text-rendering="geometricPrecision">24</text>
<text transform="translate(455.0 347.5) scale(0.86 1)" font-size="6.9" fill="#474747" text-anchor="middle" dominant-baseline="central" font-family="Liberation Sans" text-rendering="geometricPrecision">25</text>
<text transform="translate(543.8 336.9) scale(0.86 1)" font-size="6.9" fill="#474747" text-anchor="middle" dominant-baseline="central" font-family="Liberation Sans" text-rendering="geometricPrecision">30</text>
<text transform="translate(543.0 348.7) scale(0.86 1)" font-size="6.9" fill="#474747" text-anchor="middle" dominant-baseline="central" font-family="Liberation Sans" text-rendering="geometricPrecision">29</text>
<text transform="translate(538.2 360.7) scale(0.86 1)" font-size="6.9" fill="#474747" text-anchor="middle" dominant-baseline="central" font-family="Liberation Sans" text-rendering="geometricPrecision">37A</text>
<text transform="translate(562.8 358.5) scale(0.86 1)" font-size="6.9" fill="#474747" text-anchor="middle" dominant-baseline="central" font-family="Liberation Sans" text-rendering="geometricPrecision">30A</text>
<text transform="translate(395.4 364.5) scale(0.86 1)" font-size="6.9" fill="#474747" text-anchor="middle" dominant-baseline="central" font-family="Liberation Sans" text-rendering="geometricPrecision">31</text>
<text transform="translate(428.2 364.5) scale(0.86 1)" font-size="6.9" fill="#474747" text-anchor="middle" dominant-baseline="central" font-family="Liberation Sans" text-rendering="geometricPrecision">32A</text>
<text transform="translate(509.0 362.5) scale(0.86 1)" font-size="6.9" fill="#474747" text-anchor="middle" dominant-baseline="central" font-family="Liberation Sans" text-rendering="geometricPrecision">36B</text>
<text transform="translate(459.8 370.7) scale(0.86 1)" font-size="6.9" fill="#474747" text-anchor="middle" dominant-baseline="central" font-family="Liberation Sans" text-rendering="geometricPrecision">34</text>
<text transform="translate(531.0 373.6) scale(0.86 1)" font-size="6.9" fill="#474747" text-anchor="middle" dominant-baseline="central" font-family="Liberation Sans" text-rendering="geometricPrecision">37</text>
<text transform="translate(448.6 380.5) scale(0.86 1)" font-size="6.9" fill="#474747" text-anchor="middle" dominant-baseline="central" font-family="Liberation Sans" text-rendering="geometricPrecision">33</text>
<text transform="translate(413.8 387.7) scale(0.86 1)" font-size="6.9" fill="#474747" text-anchor="middle" dominant-baseline="central" font-family="Liberation Sans" text-rendering="geometricPrecision">32</text>
<text transform="translate(469.2 388.4) scale(0.86 1)" font-size="6.9" fill="#474747" text-anchor="middle" dominant-baseline="central" font-family="Liberation Sans" text-rendering="geometricPrecision">35</text>
<text transform="translate(486.3 386.9) scale(0.86 1)" font-size="6.9" fill="#474747" text-anchor="middle" dominant-baseline="central" font-family="Liberation Sans" text-rendering="geometricPrecision">36</text>
<text transform="translate(512.0 387.7) scale(0.86 1)" font-size="6.9" fill="#474747" text-anchor="middle" dominant-baseline="central" font-family="Liberation Sans" text-rendering="geometricPrecision">36A</text>
<text transform="translate(422.2 426.6) scale(0.86 1)" font-size="6.9" fill="#474747" text-anchor="middle" dominant-baseline="central" font-family="Liberation Sans" text-rendering="geometricPrecision">38</text>
<text transform="translate(453.4 420.4) scale(0.86 1)" font-size="6.9" fill="#474747" text-anchor="middle" dominant-baseline="central" font-family="Liberation Sans" text-rendering="geometricPrecision">39</text>
<text transform="translate(478.8 419.5) scale(0.86 1)" font-size="6.9" fill="#474747" text-anchor="middle" dominant-baseline="central" font-family="Liberation Sans" text-rendering="geometricPrecision">43</text>
<text transform="translate(504.2 419.5) scale(0.86 1)" font-size="6.9" fill="#474747" text-anchor="middle" dominant-baseline="central" font-family="Liberation Sans" text-rendering="geometricPrecision">48</text>
<text transform="translate(525.0 423.3) scale(0.86 1)" font-size="6.9" fill="#474747" text-anchor="middle" dominant-baseline="central" font-family="Liberation Sans" text-rendering="geometricPrecision">49</text>
<text transform="translate(483.6 429.7) scale(0.86 1)" font-size="6.9" fill="#474747" text-anchor="middle" dominant-baseline="central" font-family="Liberation Sans" text-rendering="geometricPrecision">44</text>
<text transform="translate(414.0 451.9) scale(0.86 1)" font-size="6.9" fill="#474747" text-anchor="middle" dominant-baseline="central" font-family="Liberation Sans" text-rendering="geometricPrecision">40</text>
<text transform="translate(472.0 449.5) scale(0.86 1)" font-size="6.9" fill="#474747" text-anchor="middle" dominant-baseline="central" font-family="Liberation Sans" text-rendering="geometricPrecision">45</text>
<text transform="translate(510.5 449.5) scale(0.86 1)" font-size="6.9" fill="#474747" text-anchor="middle" dominant-baseline="central" font-family="Liberation Sans" text-rendering="geometricPrecision">52</text>
<text transform="translate(535.6 446.5) scale(0.86 1)" font-size="6.9" fill="#474747" text-anchor="middle" dominant-baseline="central" font-family="Liberation Sans" text-rendering="geometricPrecision">52A</text>
<text transform="translate(536.2 406.9) scale(0.86 1)" font-size="6.9" fill="#474747" text-anchor="middle" dominant-baseline="central" font-family="Liberation Sans" text-rendering="geometricPrecision">50</text>
<text transform="translate(557.3 392.9) scale(0.86 1)" font-size="6.9" fill="#474747" text-anchor="middle" dominant-baseline="central" font-family="Liberation Sans" text-rendering="geometricPrecision">51</text>
<text transform="translate(569.0 388.9) scale(0.86 1)" font-size="6.9" fill="#474747" text-anchor="middle" dominant-baseline="central" font-family="Liberation Sans" text-rendering="geometricPrecision">58</text>
<text transform="translate(592.2 374.8) scale(0.86 1)" font-size="6.9" fill="#474747" text-anchor="middle" dominant-baseline="central" font-family="Liberation Sans" text-rendering="geometricPrecision">59</text>
<text transform="translate(588.2 382.7) scale(0.86 1)" font-size="6.9" fill="#474747" text-anchor="middle" dominant-baseline="central" font-family="Liberation Sans" text-rendering="geometricPrecision">59A</text>
<text transform="translate(626.0 365.9) scale(0.86 1)" font-size="6.9" fill="#474747" text-anchor="middle" dominant-baseline="central" font-family="Liberation Sans" text-rendering="geometricPrecision">61</text>
<text transform="translate(628.4 383.9) scale(0.86 1)" font-size="6.9" fill="#474747" text-anchor="middle" dominant-baseline="central" font-family="Liberation Sans" text-rendering="geometricPrecision">60</text>
<text transform="translate(646.1 384.5) scale(0.86 1)" font-size="6.9" fill="#474747" text-anchor="middle" dominant-baseline="central" font-family="Liberation Sans" text-rendering="geometricPrecision">62A</text>
<text transform="translate(617.4 392.1) scale(0.86 1)" font-size="6.9" fill="#474747" text-anchor="middle" dominant-baseline="central" font-family="Liberation Sans" text-rendering="geometricPrecision">60A</text>
<text transform="translate(638.6 397.4) scale(0.86 1)" font-size="6.9" fill="#474747" text-anchor="middle" dominant-baseline="central" font-family="Liberation Sans" text-rendering="geometricPrecision">62</text>
<text transform="translate(632.0 411.5) scale(0.86 1)" font-size="6.9" fill="#474747" text-anchor="middle" dominant-baseline="central" font-family="Liberation Sans" text-rendering="geometricPrecision">64</text>
<text transform="translate(586.0 416.4) scale(0.86 1)" font-size="6.9" fill="#474747" text-anchor="middle" dominant-baseline="central" font-family="Liberation Sans" text-rendering="geometricPrecision">63</text>
<text transform="translate(617.9 417.5) scale(0.86 1)" font-size="6.9" fill="#474747" text-anchor="middle" dominant-baseline="central" font-family="Liberation Sans" text-rendering="geometricPrecision">63A</text>
<text transform="translate(647.0 415.4) scale(0.86 1)" font-size="6.9" fill="#474747" text-anchor="middle" dominant-baseline="central" font-family="Liberation Sans" text-rendering="geometricPrecision">65</text>
<text transform="translate(641.0 431.9) scale(0.86 1)" font-size="6.9" fill="#474747" text-anchor="middle" dominant-baseline="central" font-family="Liberation Sans" text-rendering="geometricPrecision">67</text>
<text transform="translate(642.5 438.5) scale(0.86 1)" font-size="6.9" fill="#474747" text-anchor="middle" dominant-baseline="central" font-family="Liberation Sans" text-rendering="geometricPrecision">66</text>
<text transform="translate(617.0 441.5) scale(0.86 1)" font-size="6.9" fill="#474747" text-anchor="middle" dominant-baseline="central" font-family="Liberation Sans" text-rendering="geometricPrecision">69</text>
<text transform="translate(572.5 449.9) scale(0.86 1)" font-size="6.9" fill="#474747" text-anchor="middle" dominant-baseline="central" font-family="Liberation Sans" text-rendering="geometricPrecision">68</text>
<text transform="translate(593.6 449.0) scale(0.86 1)" font-size="6.9" fill="#474747" text-anchor="middle" dominant-baseline="central" font-family="Liberation Sans" text-rendering="geometricPrecision">68A</text>
<text transform="translate(645.5 452.9) scale(0.86 1)" font-size="6.9" fill="#474747" text-anchor="middle" dominant-baseline="central" font-family="Liberation Sans" text-rendering="geometricPrecision">66A</text>
<text transform="translate(656.6 377.9) scale(0.86 1)" font-size="6.9" fill="#474747" text-anchor="middle" dominant-baseline="central" font-family="Liberation Sans" text-rendering="geometricPrecision">YNP</text>
<text x="360.0" y="165.2" font-size="5.4" fill="#8a8e96" text-anchor="middle" dominant-baseline="central" font-family="Liberation Sans" letter-spacing="0.2">SPOKANE•</text>
<text x="380.0" y="244.8" font-size="5.2" fill="#999" text-anchor="middle" dominant-baseline="central" font-family="Liberation Sans" letter-spacing="0.2">Lewiston•</text>
<text x="282.0" y="253.2" font-size="5.2" fill="#999" text-anchor="middle" dominant-baseline="central" font-family="Liberation Sans" letter-spacing="0.2">Richland•</text>
<text x="320.0" y="267.2" font-size="5.2" fill="#999" text-anchor="middle" dominant-baseline="central" font-family="Liberation Sans" letter-spacing="0.2">Walla Walla•</text>
<text x="510.8" y="216.1" font-size="5.6" fill="#8a8e96" text-anchor="middle" dominant-baseline="central" font-family="Liberation Sans" letter-spacing="0.2">MISSOULA•</text>
<text x="626.0" y="174.8" font-size="5.5" fill="#8a8e96" text-anchor="middle" dominant-baseline="central" font-family="Liberation Sans" letter-spacing="0.2">GREAT FALLS•</text>
<text x="716.0" y="183.2" font-size="6.4" fill="#8a8e96" text-anchor="middle" dominant-baseline="central" font-family="Liberation Sans" letter-spacing="0.2">MONTANA</text>
<text x="600.0" y="233.2" font-size="5.6" fill="#8a8e96" text-anchor="middle" dominant-baseline="central" font-family="Liberation Sans" letter-spacing="0.2">HELENA•</text>
<text x="582.8" y="270.4" font-size="5.2" fill="#888" text-anchor="middle" dominant-baseline="central" font-family="Liberation Sans" letter-spacing="0.2">Butte•</text>
<text x="642.0" y="291.2" font-size="5.2" fill="#888" text-anchor="middle" dominant-baseline="central" font-family="Liberation Sans" letter-spacing="0.2">Bozeman•</text>
<text x="753.2" y="284.4" font-size="5.6" fill="#8a8e96" text-anchor="middle" dominant-baseline="central" font-family="Liberation Sans" letter-spacing="0.2">BILLINGS•</text>
<text x="735.0" y="363.2" font-size="5.2" fill="#888" text-anchor="middle" dominant-baseline="central" font-family="Liberation Sans" letter-spacing="0.2">Cody•</text>
<text x="761.0" y="454.0" font-size="5.2" fill="#888" text-anchor="middle" dominant-baseline="central" font-family="Liberation Sans" letter-spacing="0.2">Riverton•</text>
<text x="418.0" y="418.6" font-size="5.6" fill="#777b82" text-anchor="middle" dominant-baseline="central" font-family="Liberation Sans" letter-spacing="0.2">BOISE</text>
<text x="525.0" y="417.0" font-size="6.4" fill="#7d8087" text-anchor="middle" dominant-baseline="central" font-family="Liberation Sans" letter-spacing="0.2">IDAHO</text>
<text x="597.5" y="426.5" font-size="5.2" fill="#c9c9c9" text-anchor="middle" dominant-baseline="central" font-family="Liberation Sans" letter-spacing="0.2">Idaho Falls</text>
<text x="791.8" y="446.0" font-size="6.0" fill="#666" text-anchor="middle" dominant-baseline="central" font-family="Liberation Sans" letter-spacing="0.2">V</text>
<text x="275.3" y="189.5" font-size="6.5" fill="#8a8e96" text-anchor="end" dominant-baseline="central" font-family="Liberation Sans" letter-spacing="0.35">SHINGTON</text>
<text x="250" y="179.9" font-size="5.2" fill="#8a8e96" text-anchor="end" dominant-baseline="central" font-family="Liberation Sans">e•</text>
</svg>
<div class="a" style="left:244px;top:131px;width:26px;height:26px;background:#fff;border-radius:3px;box-shadow:0 1px 2px rgba(0,0,0,0.22)"></div>
<svg class="a" style="left:253px;top:140px" width="8" height="8" viewBox="0 0 8 8"><path d="M5.2 1 L2.5 4 L5.2 7" fill="none" stroke="#2a2a2a" stroke-width="1.1"/></svg>
<div class="a" style="left:247.5px;top:403.6px;width:17px;height:16.8px;background:#fff;border:0.7px solid #d6d6d6;border-radius:2.5px"></div>
<svg class="a" style="left:252px;top:408px" width="8" height="8" viewBox="0 0 8 8" fill="none" stroke="#444" stroke-width="0.8"><path d="M0.6 2.2 V0.6 H2.2 M5.8 0.6 H7.4 V2.2 M7.4 5.8 V7.4 H5.8 M2.2 7.4 H0.6 V5.8"/><rect x="2.3" y="2.6" width="3.4" height="2.8" rx="0.8"/></svg>
<div class="a" style="left:249.4px;top:427.1px;width:14.7px;height:29.3px;background:#fff;border:0.7px solid #d6d6d6;border-radius:2px"></div>
<div class="a" style="left:249.4px;top:441.8px;width:14.7px;height:0.7px;background:#e0e0e0"></div>
<svg class="a" style="left:252.5px;top:432px" width="8" height="8" viewBox="0 0 8 8"><path d="M4 1 V7 M1 4 H7" stroke="#222" stroke-width="1.2"/></svg>
<svg class="a" style="left:252.5px;top:446px" width="8" height="8" viewBox="0 0 8 8"><path d="M1.2 4 H6.8" stroke="#333" stroke-width="1.1"/></svg>

</body></html>
